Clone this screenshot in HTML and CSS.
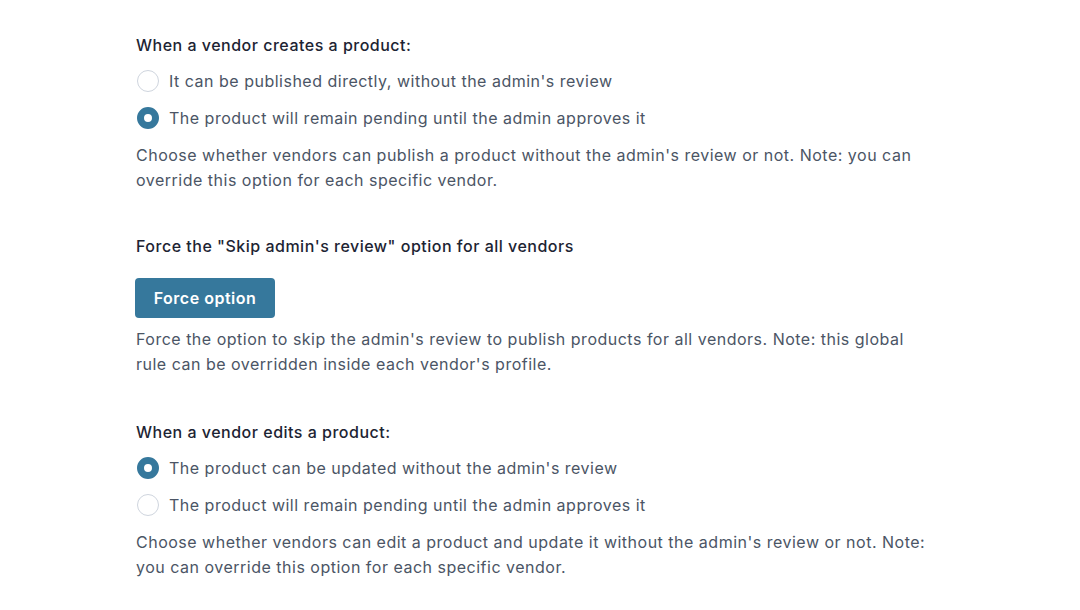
FILE: index.html
```html
<!DOCTYPE html>
<html>
<head>
<meta charset="utf-8">
<link rel="stylesheet" href="styles.css">
</head>
<body>
<div class="page">
  <section class="field">
    <div class="label">When a vendor creates a product:</div>
    <div class="options">
      <label class="opt"><span class="radio"></span>It can be published directly, without the admin's review</label>
      <label class="opt"><span class="radio on"></span>The product will remain pending until the admin approves it</label>
    </div>
    <p class="desc">Choose whether vendors can publish a product without the admin's review or not. Note: you can override this option for each specific vendor.</p>
  </section>
  <section class="field">
    <div class="label">Force the "Skip admin's review" option for all vendors</div>
    <button class="btn">Force option</button>
    <p class="desc after-btn">Force the option to skip the admin's review to publish products for all vendors. Note: this global rule can be overridden inside each vendor's profile.</p>
  </section>
  <section class="field last">
    <div class="label">When a vendor edits a product:</div>
    <div class="options">
      <label class="opt"><span class="radio on"></span>The product can be updated without the admin's review</label>
      <label class="opt"><span class="radio"></span>The product will remain pending until the admin approves it</label>
    </div>
    <p class="desc">Choose whether vendors can edit a product and update it without the admin's review or not. Note: you can override this option for each specific vendor.</p>
  </section>
</div>
</body>
</html>
```
FILE: styles.css
```css
html, body { margin: 0; padding: 0; background: #fff; }
body { font-family: Inter, "Open Sans", sans-serif; letter-spacing: 0.5px; }
.page { padding: 33px 0 0 136px; width: 790px; display: flex; flex-direction: column; gap: 41px; }
.field { display: flex; flex-direction: column; }
.field.last { margin-top: 2px; }
.label { font-size: 16px; font-weight: 500; color: #1d2433; line-height: 24px; }
.options { display: flex; flex-direction: column; gap: 13px; margin-top: 12px; }
.opt { display: flex; align-items: center; gap: 10px; font-size: 16px; color: #4b5565; line-height: 24px; }
.radio { width: 22px; height: 22px; border: 1px solid #cfd5de; border-radius: 50%; box-sizing: border-box; margin-left: 1px; }
.radio.on { background: #fff; border: 7px solid #36789c; }
.desc { margin: 13px 0 0; font-size: 16px; line-height: 25px; color: #4b5565; }
.desc.after-btn { margin-top: 9px; }
.btn { align-self: flex-start; margin-top: 20px; margin-left: -1px; background: #36789c; color: #fff; border: 0; border-radius: 4px; height: 40px; width: 140px; font-family: inherit; letter-spacing: 0.5px; font-size: 16px; font-weight: 600; padding: 0; }
```
